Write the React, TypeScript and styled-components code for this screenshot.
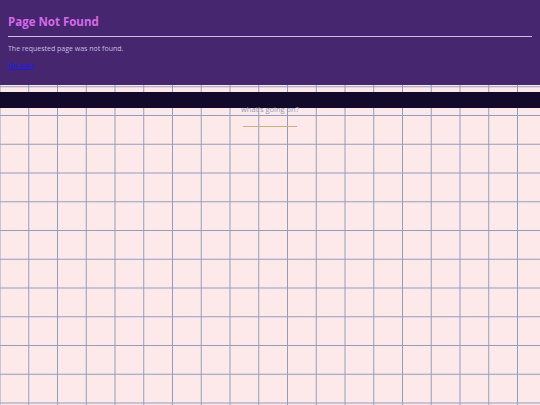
import styled, { createGlobalStyle } from "styled-components"

const GlobalStyle = createGlobalStyle`
  html, body {
    margin: 0;
    padding: 0;
  }
  body {
    min-height: 405px;
    font-family: "Open Sans", "Liberation Sans", sans-serif;
    background-color: #fde9ea;
    background-image:
      linear-gradient(to right, #939dbb 0, #939dbb 1.25px, transparent 1.25px),
      linear-gradient(to bottom, #939dbb 0, #939dbb 1.25px, transparent 1.25px);
    background-size: 28.75px 28.75px;
    background-position: -0.5px 0;
  }
`

const App = () => {
  return (
    <Page>
      <GlobalStyle />
      <Header>
        <Title>Page Not Found</Title>
        <Rule />
        <Message>The requested page was not found.</Message>
        <BackLink href="#">Go back</BackLink>
      </Header>
      <Band />
      <Caption>
        <CaptionText>what's going on?</CaptionText>
        <CaptionLine />
      </Caption>
    </Page>
  )
}

export default App

const Page = styled.div`
  display: flex;
  flex-direction: column;
  width: 100%;
`
const Header = styled.header`
  display: flex;
  flex-direction: column;
  align-items: flex-start;
  height: 85px;
  box-sizing: border-box;
  padding: 14px 8px 0 8px;
  background: #45266f;
`
const Title = styled.h1`
  margin: 0;
  font-size: 11.5px;
  font-weight: 700;
  line-height: 16px;
  color: #d66ae6;
`
const Rule = styled.div`
  align-self: stretch;
  height: 1px;
  margin-top: 6px;
  background: #cdb8e6;
`
const Message = styled.p`
  margin: 7px 0 0 0;
  font-size: 7px;
  line-height: 10px;
  color: #c7bfe0;
`
const BackLink = styled.a`
  margin-top: 7px;
  font-size: 7px;
  line-height: 10px;
  color: #1b1be8;
  text-decoration: underline;
`
const Band = styled.div`
  height: 16px;
  margin-top: 7px;
  background: #130a2b;
`
const Caption = styled.div`
  display: flex;
  flex-direction: column;
  align-items: center;
  margin-top: -4px;
`
const CaptionText = styled.span`
  font-size: 7.5px;
  line-height: 10px;
  color: #9297b6;
`
const CaptionLine = styled.div`
  width: 54px;
  height: 1px;
  margin-top: 12px;
  background: #c9ad8d;
`
